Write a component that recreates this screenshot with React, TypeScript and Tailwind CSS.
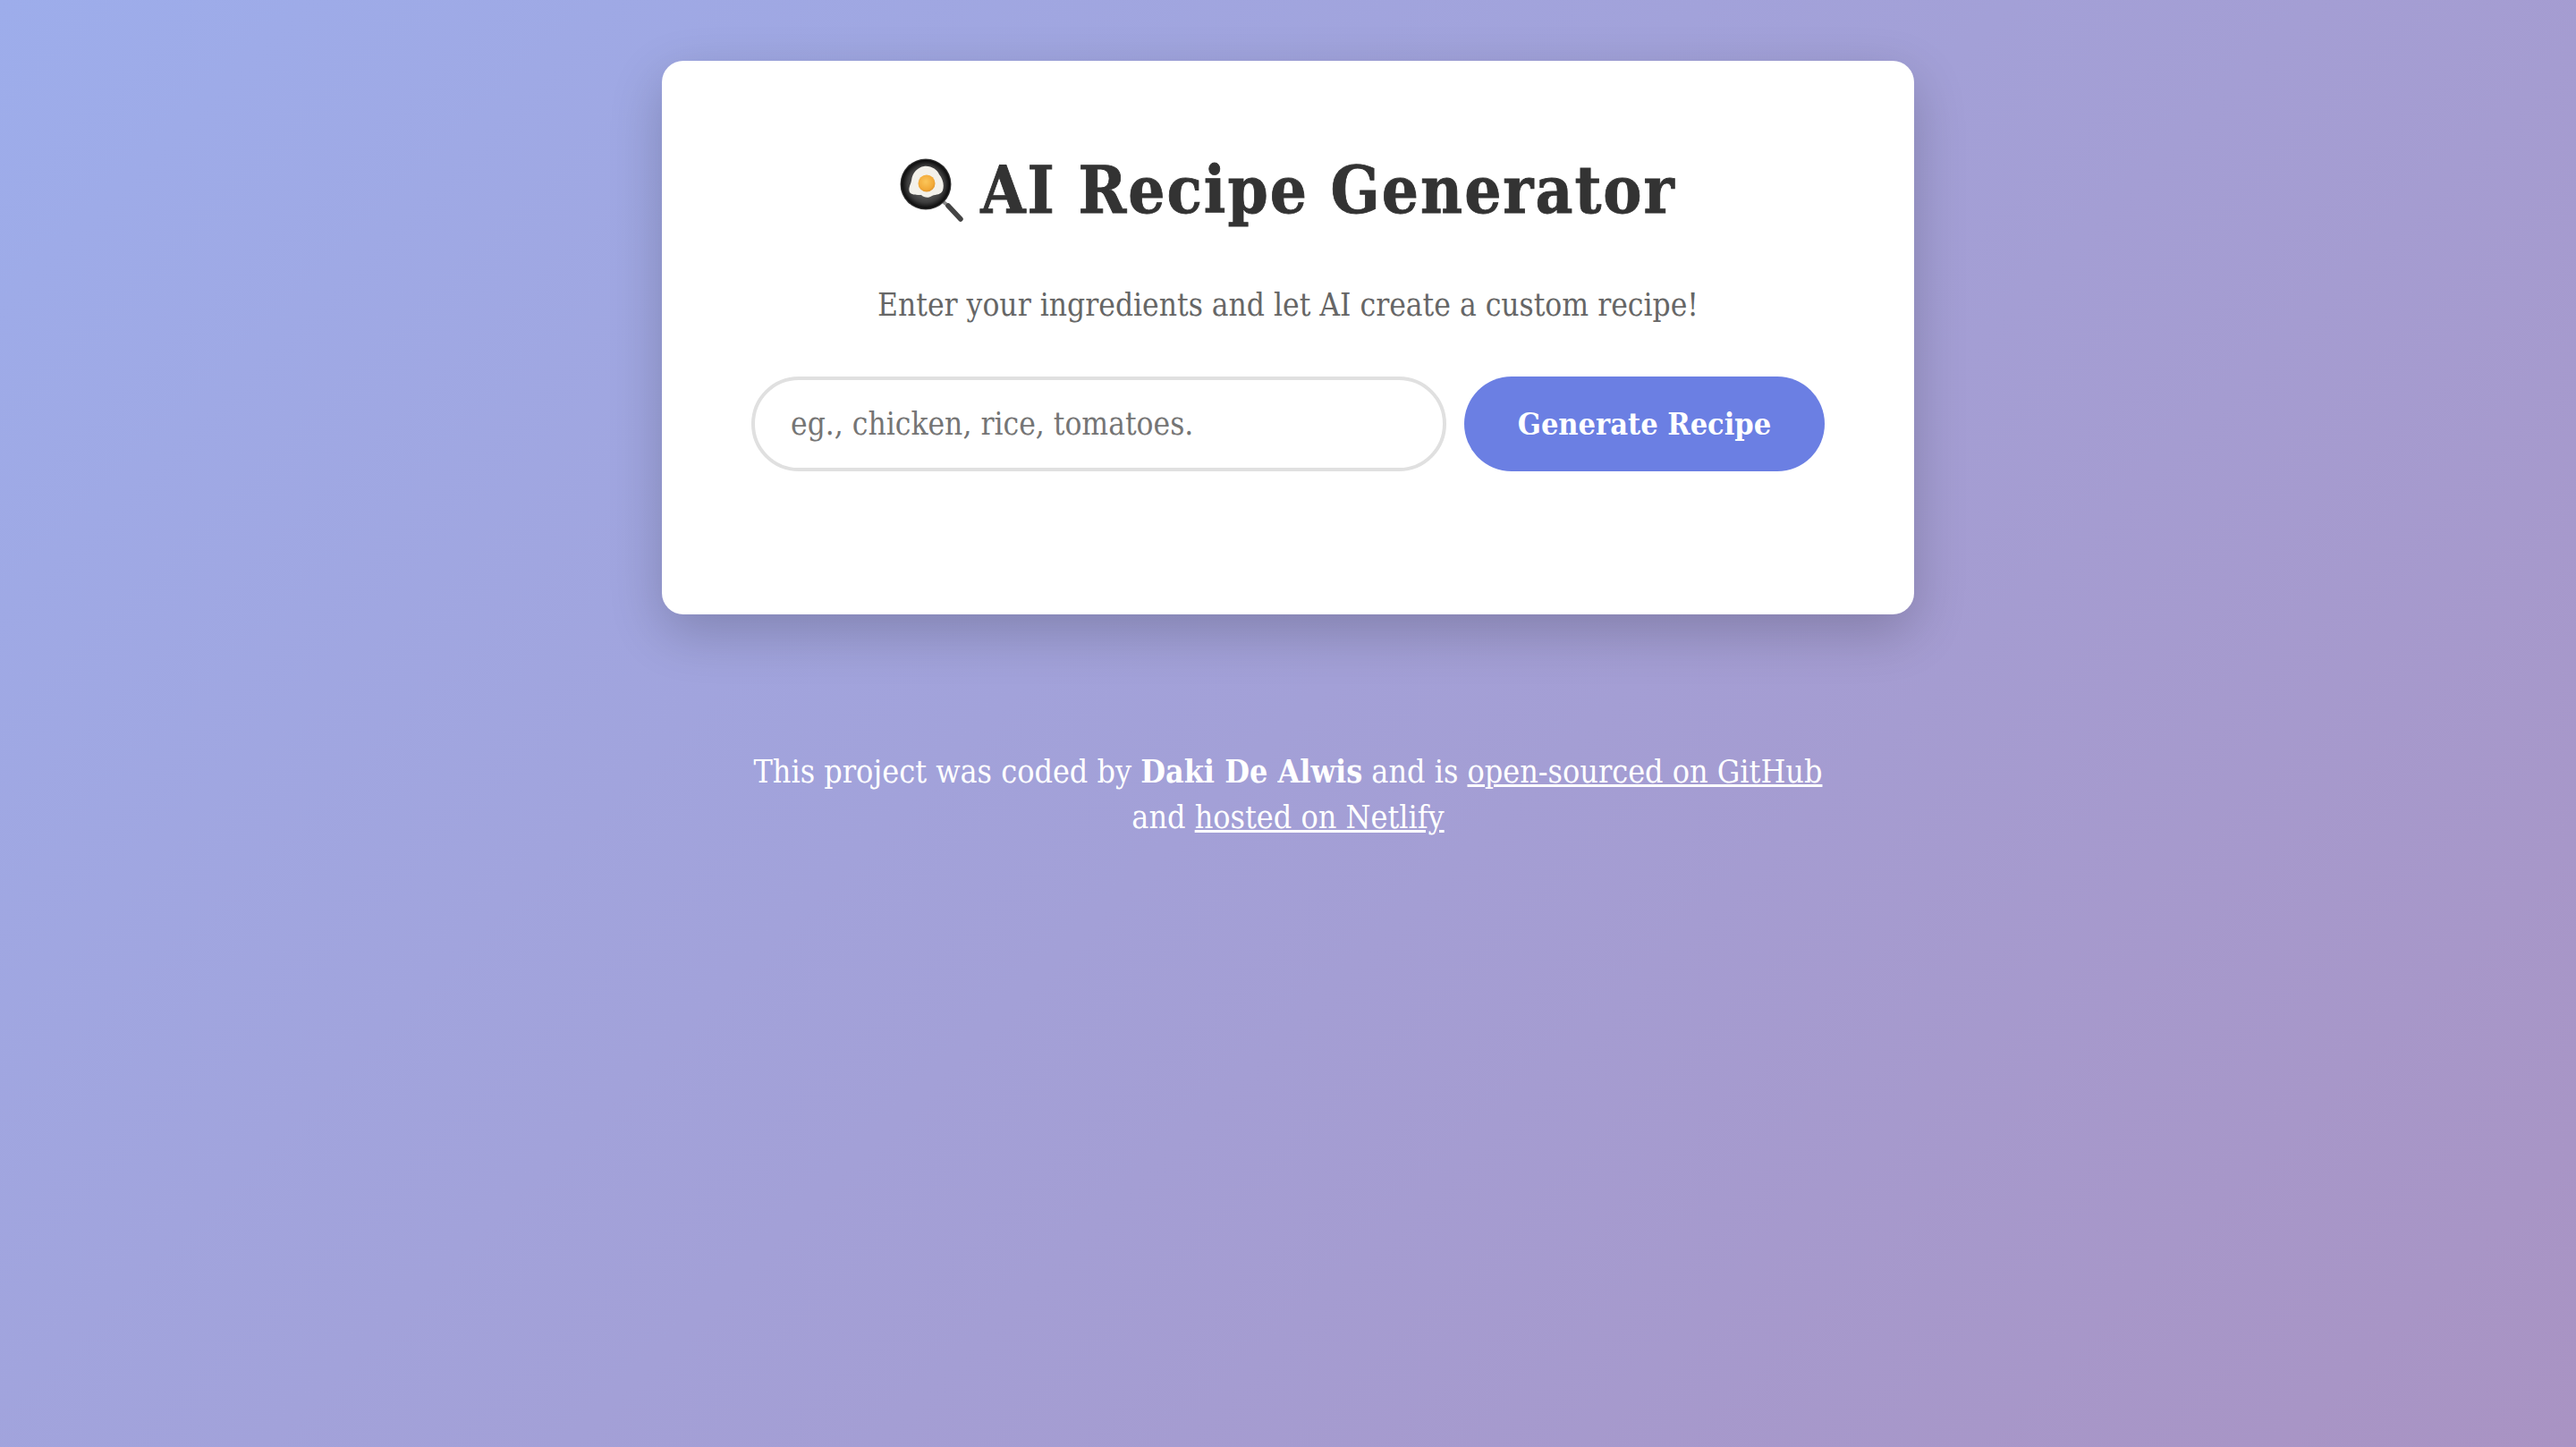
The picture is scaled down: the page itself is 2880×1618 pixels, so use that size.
function PanIcon() {
  return (
    <svg width="72" height="72" viewBox="0 0 72 72" className="shrink-0">
      <defs>
        <radialGradient id="yolk" cx="0.45" cy="0.4" r="0.65">
          <stop offset="0" stopColor="#fcc65a" />
          <stop offset="0.7" stopColor="#f2aa38" />
          <stop offset="1" stopColor="#dc9028" />
        </radialGradient>
        <radialGradient id="pan" cx="0.5" cy="0.5" r="0.5">
          <stop offset="0" stopColor="#8a8a8a" />
          <stop offset="0.72" stopColor="#3c3c3c" />
          <stop offset="0.93" stopColor="#0e0e0e" />
          <stop offset="1" stopColor="#444444" />
        </radialGradient>
      </defs>
      {/* handle */}
      <path d="M49 49 L54 53" stroke="#8a8a8a" strokeWidth="4" />
      <path d="M54 53 L68 68" stroke="#444" strokeWidth="5.5" strokeLinecap="round" />
      {/* pan */}
      <circle cx="29" cy="29" r="28.5" fill="url(#pan)" />
      <path
        d="M27 9 C35 8 42 13 44 18 C48 23 50 29 48 36 C46 41 41 40 36 42 C32 45 27 44 24 41 C19 41 13 41 11 38 C9 33 12 30 13 25 C14 16 20 10 27 9 Z"
        fill="#f3f1ea"
      />
      <circle cx="30" cy="28" r="9.5" fill="url(#yolk)" />
    </svg>
  )
}

export default function App() {
  return (
    <div className="min-h-screen w-full bg-[linear-gradient(135deg,#9dadeb,#a993c3)] flex flex-col items-center pt-[68px] font-['DejaVu_Serif_Condensed','DejaVu_Serif',serif]">
      {/* Card */}
      <div className="w-[1400px] h-[619px] bg-white rounded-[24px] shadow-[0_20px_60px_rgba(0,0,0,0.2)] px-[100px] flex flex-col">
        <h1 className="mt-[105px] h-[80px] flex items-center justify-center gap-[18px] text-[72px] tracking-[2px] leading-none font-bold text-[#333] [-webkit-text-stroke:0.8px_#333]">
          <PanIcon />
          <span>AI Recipe Generator</span>
        </h1>
        <p className="mt-[66px] text-center text-[35px] leading-[44px] text-[#666]">
          Enter your ingredients and let AI create a custom recipe!
        </p>
        <form className="mt-[58px] flex gap-5">
          <input
            placeholder="eg., chicken, rice, tomatoes."
            className="w-[777px] h-[106px] rounded-full border-[4px] border-[#e0e0e0] px-[40px] text-[35px] outline-none placeholder:text-[#757575] font-['DejaVu_Serif_Condensed','DejaVu_Serif',serif]"
          />
          <button
            type="button"
            className="w-[403px] h-[106px] rounded-full bg-[#6b7fe3] text-white text-[34px] font-bold font-['DejaVu_Serif_Condensed','DejaVu_Serif',serif]"
          >
            Generate Recipe
          </button>
        </form>
      </div>

      {/* Footer */}
      <footer className="mt-[150px] text-center text-white text-[35.6px] leading-[51px]">
        This project was coded by <strong className="font-bold">Daki De Alwis</strong> and is{' '}
        <a href="#" className="underline">open-sourced on GitHub</a>
        <br />
        and <a href="#" className="underline">hosted on Netlify</a>
      </footer>
    </div>
  )
}
